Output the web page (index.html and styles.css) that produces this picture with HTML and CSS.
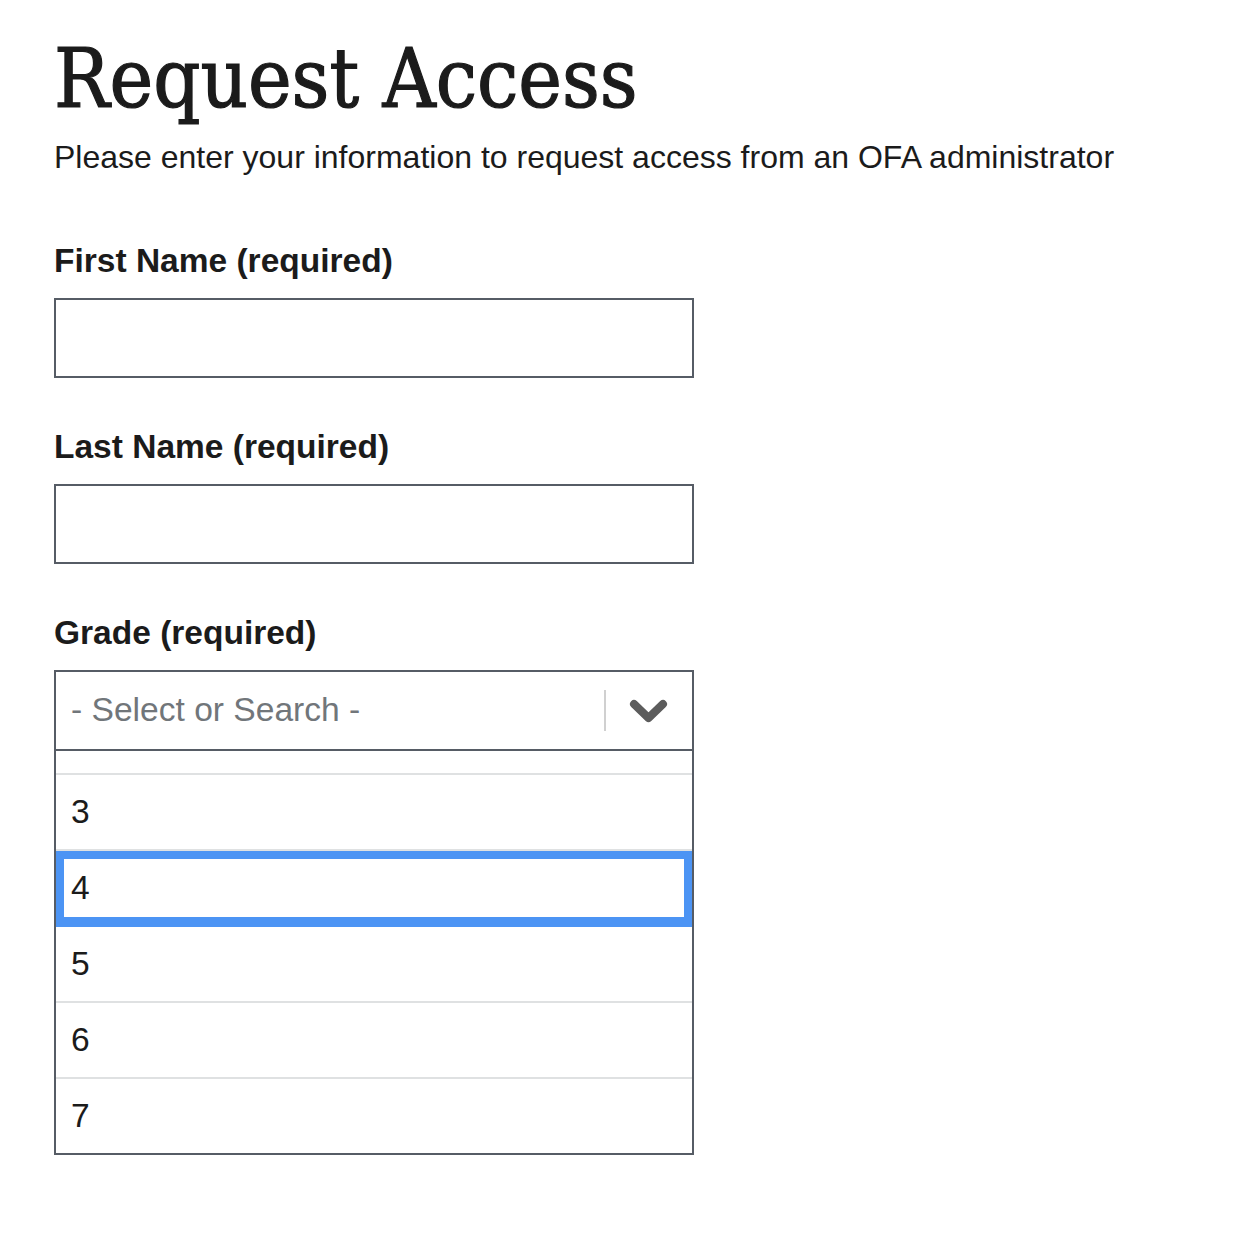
FILE: index.html
```html
<!DOCTYPE html>
<html lang="en">
<head>
<meta charset="utf-8">
<title>Request Access</title>
<link rel="stylesheet" href="styles.css">
</head>
<body>
<main class="page">
  <h1 class="title">Request Access</h1>
  <p class="intro">Please enter your information to request access from an OFA administrator</p>

  <div class="field">
    <label class="label" for="first">First Name (required)</label>
    <input class="input" id="first" type="text">
  </div>

  <div class="field">
    <label class="label" for="last">Last Name (required)</label>
    <input class="input" id="last" type="text">
  </div>

  <div class="field">
    <label class="label">Grade (required)</label>
    <div class="combo">
      <div class="control">
        <span class="placeholder">- Select or Search -</span>
        <span class="sep"></span>
        <span class="chev">
          <svg width="40" height="26" viewBox="0 0 40 26"><polyline points="5,5 19.5,19 34,5" fill="none" stroke="#5c5c5c" stroke-width="8" stroke-linecap="round" stroke-linejoin="round"/></svg>
        </span>
      </div>
      <ul class="menu">
        <li class="opt opt-partial"></li>
        <li class="opt">3</li>
        <li class="opt focus">4</li>
        <li class="opt">5</li>
        <li class="opt">6</li>
        <li class="opt">7</li>
      </ul>
    </div>
  </div>
</main>
</body>
</html>
```

FILE: styles.css
```css
html, body {
  margin: 0;
  padding: 0;
  background: #ffffff;
}

body {
  font-family: "Liberation Sans", Arial, sans-serif;
  color: #1b1b1b;
}

.page {
  padding: 0 0 0 54px;
  width: 640px;
}

.title {
  font-family: "DejaVu Serif Condensed", "DejaVu Serif", "Liberation Serif", serif;
  font-stretch: condensed;
  font-weight: normal;
  font-size: 82px;
  line-height: 80px;
  margin: 39px 0 0 0;
  letter-spacing: 0;
  white-space: nowrap;
  -webkit-text-stroke: 1.2px #1b1b1b;
}

.intro {
  font-size: 32px;
  line-height: 40px;
  margin: 18px 0 0 0;
  width: 1150px;
}

.field {
  display: flex;
  flex-direction: column;
}

.label {
  font-weight: bold;
  font-size: 33.5px;
  line-height: 40px;
  margin-top: 64px;
  display: block;
}

.field + .field .label {
  margin-top: 49px;
}

.input {
  box-sizing: border-box;
  margin: 17px 0 0 0;
  width: 640px;
  height: 80px;
  border: 2px solid #565c65;
  border-radius: 0;
  padding: 0 14px;
  font: inherit;
  font-size: 34px;
  background: #fff;
}

.combo {
  margin-top: 17px;
  width: 640px;
}

.control {
  box-sizing: border-box;
  height: 81px;
  border: 2px solid #565c65;
  display: flex;
  align-items: center;
  padding-left: 15px;
}

.placeholder {
  flex: 1;
  font-size: 33.6px;
  color: #71767a;
  padding-bottom: 2px;
}

.sep {
  width: 2px;
  height: 41px;
  background: #d0d0d0;
}

.chev {
  width: 86px;
  display: flex;
  justify-content: center;
  align-items: center;
  padding-top: 2px;
}

.chev svg {
  display: block;
}

.menu {
  list-style: none;
  margin: 0;
  padding: 0;
  border: 2px solid #565c65;
  border-top: 0;
}

.opt {
  height: 74px;
  line-height: 74px;
  border-top: 2px solid #dfe1e2;
  padding-left: 15px;
  font-size: 33.6px;
  color: #1b1b1b;
}

.opt-partial {
  height: 22px;
  border-top: 0;
}

.opt.focus {
  box-shadow: inset 0 0 0 8px #4c94f4;
}

.opt.focus + .opt {
  border-top-color: #4c94f4;
}
```
